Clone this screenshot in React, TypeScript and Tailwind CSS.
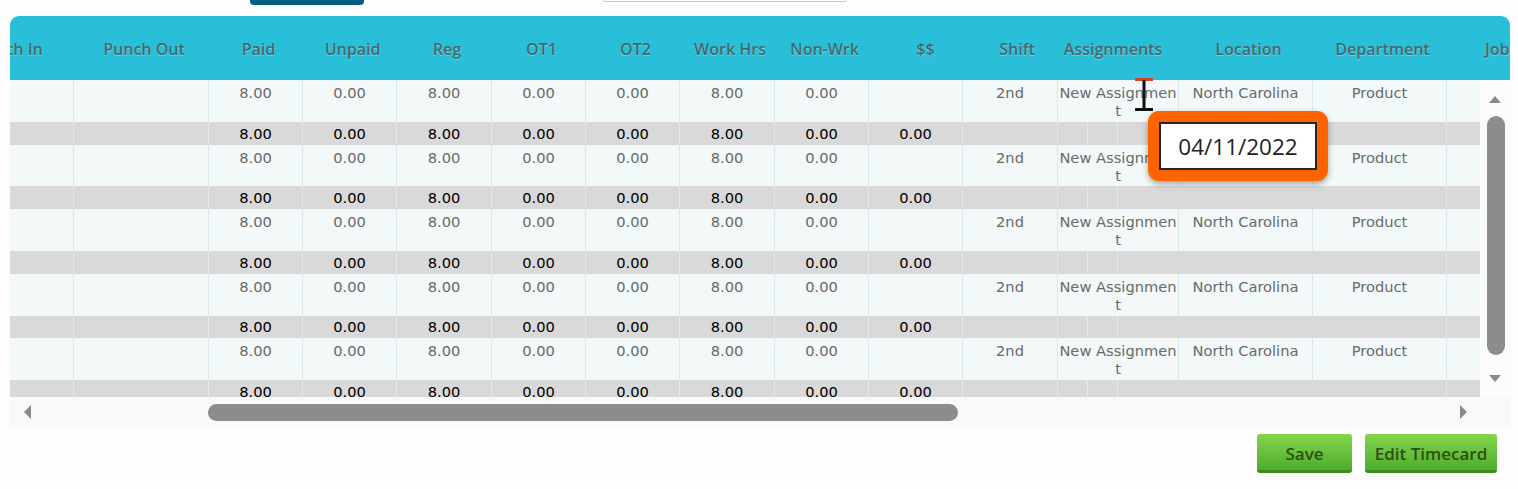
import React from 'react';

type Col = {
  key: string;
  w: string;
  label: string;
  head?: string;
  data?: string;
  total?: string;
};

const cols: Col[] = [
  { key: 'pin', w: 'w-[135px]', label: 'Punch In' },
  { key: 'pout', w: 'w-[135px]', label: 'Punch Out' },
  { key: 'paid', w: 'w-[94px]', label: 'Paid', data: '8.00', total: '8.00' },
  { key: 'unpaid', w: 'w-[94px]', label: 'Unpaid', data: '0.00', total: '0.00' },
  { key: 'reg', w: 'w-[95px]', label: 'Reg', data: '8.00', total: '8.00' },
  { key: 'ot1', w: 'w-[94px]', label: 'OT1', data: '0.00', total: '0.00' },
  { key: 'ot2', w: 'w-[94px]', label: 'OT2', data: '0.00', total: '0.00' },
  { key: 'work', w: 'w-[95px]', label: 'Work Hrs', data: '8.00', total: '8.00' },
  { key: 'nonwrk', w: 'w-[94px]', label: 'Non-Wrk', data: '0.00', total: '0.00' },
  { key: 'money', w: 'w-[94px]', label: '$$', head: 'pl-[19px]', total: '0.00' },
  { key: 'shift', w: 'w-[95px]', label: 'Shift', head: 'pl-[13px]', data: '2nd' },
  { key: 'assign', w: 'w-[121px]', label: 'Assignments', head: 'pr-[16px]', data: 'New Assignment' },
  { key: 'loc', w: 'w-[134px]', label: 'Location', data: 'North Carolina' },
  { key: 'dept', w: 'w-[134px]', label: 'Department', data: 'Product' },
  { key: 'job', w: 'w-[134px]', label: 'Job', head: 'justify-start pl-[38px]' },
];

const rowHeights: [string, string][] = [
  ['h-[42px]', 'h-[23px]'],
  ['h-[41px]', 'h-[23px]'],
  ['h-[42px]', 'h-[23px]'],
  ['h-[42px]', 'h-[22px]'],
  ['h-[42px]', 'h-[23px]'],
];

const DataRow = ({ h }: { h: string }) => (
  <div className={`flex ${h} bg-[#f3f9f9]`}>
    {cols.map((c) => (
      <div
        key={c.key}
        className={`${c.w} shrink-0 border-r border-[#d6e8ea] px-[1px] pt-[4px] text-center leading-[18px] break-all text-[#6a6a6a]`}
      >
        {c.data}
      </div>
    ))}
  </div>
);

const TotalRow = ({ h }: { h: string }) => {
  const plain = cols.slice(0, 11);
  return (
    <div className={`flex ${h} bg-[#d9d9d9] text-black`}>
      {plain.map((c) => (
        <div
          key={c.key}
          className={`${c.w} shrink-0 border-r border-[#e2ebeb] flex items-center justify-center`}
        >
          {c.total}
        </div>
      ))}
      <div className="w-[30px] shrink-0 border-r border-[#e2ebeb]" />
      <div className="w-[30px] shrink-0 border-r border-[#e2ebeb]" />
      <div className="w-[61px] shrink-0" />
      <div className="w-[268px] shrink-0 border-r border-[#e2ebeb]" />
      <div className="w-[134px] shrink-0" />
    </div>
  );
};

export default function App() {
  return (
    <div className="relative w-[1518px] h-[489px] overflow-hidden bg-[#fdfdfd] font-['DejaVu_Sans',sans-serif] text-[14.67px]">
      {/* bits of the toolbar above, scrolled off */}
      <div className="flex h-[16px] items-start">
        <div className="ml-[250px] w-[114px] h-[5px] rounded-b-[4px] bg-[#045e80]" />
        <div className="ml-[239px] w-[243px] h-[2px] rounded-b-[3px] border-x border-b border-[#c9c9c9] bg-white" />
      </div>

      <div className="mx-[10px] w-[1500px]">
        {/* header */}
        <div className="h-[64px] overflow-hidden rounded-t-[9px] bg-[#29bfd9]">
          <div className="flex h-full -ml-[71px] pt-[1px] font-['Open_Sans',sans-serif] font-semibold text-[16px] text-[#43686e] [text-shadow:0_1px_1px_rgba(255,255,255,0.35)]">
            {cols.map((c) => (
              <div
                key={c.key}
                className={`${c.w} shrink-0 flex items-center justify-center whitespace-nowrap pl-[5px] ${c.head ?? ''}`}
              >
                {c.label}
              </div>
            ))}
          </div>
        </div>

        {/* body */}
        <div className="flex h-[317px]">
          <div className="w-[1470px] h-full overflow-hidden">
            <div className="-ml-[71px] w-[1600px]">
              {rowHeights.map(([a, b], i) => (
                <React.Fragment key={i}>
                  <DataRow h={a} />
                  <TotalRow h={b} />
                </React.Fragment>
              ))}
            </div>
          </div>
          <div className="w-[30px] h-full bg-[#fcfcfc] flex flex-col items-center pt-[16px]">
            <svg width="12" height="7" viewBox="0 0 12 7">
              <polygon points="0,7 12,7 6,0" fill="#8a8a8a" />
            </svg>
            <div className="mt-[13px] ml-[2px] w-[18px] h-[239px] rounded-full bg-[#8c8c8c]" />
            <svg className="mt-[20px]" width="12" height="7" viewBox="0 0 12 7">
              <polygon points="0,0 12,0 6,7" fill="#8a8a8a" />
            </svg>
          </div>
        </div>

        {/* horizontal scrollbar */}
        <div className="flex h-[30px] items-center bg-[#f9f9f9]">
          <svg className="ml-[14px]" width="7" height="14" viewBox="0 0 7 14">
            <polygon points="7,0 7,14 0,7" fill="#8a8a8a" />
          </svg>
          <div className="ml-[177px] w-[750px] h-[17px] rounded-full bg-[#8c8c8c]" />
          <svg className="ml-[502px]" width="7" height="14" viewBox="0 0 7 14">
            <polygon points="0,0 0,14 7,7" fill="#8a8a8a" />
          </svg>
        </div>
      </div>

      {/* buttons */}
      <div className="flex justify-end gap-[13px] pr-[21px] pt-[7px] font-['Open_Sans',sans-serif] font-semibold text-[17px] text-[#2d4f10]">
        <button className="w-[95px] h-[39px] pt-[3px] rounded-[3px] border-b-[3px] border-[#3d8a1f] bg-gradient-to-b from-[#84d54b] to-[#4dad2d]">
          Save
        </button>
        <button className="w-[132px] h-[39px] pt-[3px] rounded-[3px] border-b-[3px] border-[#3d8a1f] bg-gradient-to-b from-[#84d54b] to-[#4dad2d] whitespace-nowrap">
          Edit Timecard
        </button>
      </div>

      {/* date tooltip */}
      <div className="absolute left-[1148px] top-[111px] w-[180px] h-[70px] rounded-[11px] bg-[#ff6300] p-[11px] shadow-[0_3px_6px_rgba(0,0,0,0.35)]">
        <div className="w-full h-full pt-[2px] border-2 border-[#262626] bg-white flex items-center justify-center font-['Open_Sans',sans-serif] text-[22.5px] text-[#222]">
          04/11/2022
        </div>
      </div>

      {/* text cursor */}
      <svg className="absolute left-[1134px] top-[78px]" width="20" height="35" viewBox="0 0 20 35">
        <rect x="1" y="0" width="18" height="3" fill="#d9412b" />
        <rect x="8.5" y="2" width="3" height="30" fill="#111" />
        <rect x="1" y="30" width="18" height="3" fill="#111" />
      </svg>
    </div>
  );
}
